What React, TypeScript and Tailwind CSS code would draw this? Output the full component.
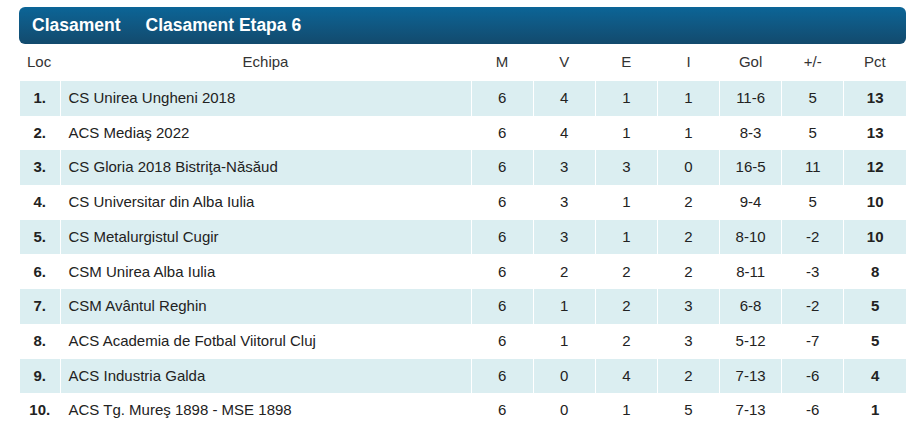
const rows: [number, string, number, number, number, number, string, number, number][] = [
  [1, "CS Unirea Ungheni 2018", 6, 4, 1, 1, "11-6", 5, 13],
  [2, "ACS Mediaş 2022", 6, 4, 1, 1, "8-3", 5, 13],
  [3, "CS Gloria 2018 Bistriţa-Năsăud", 6, 3, 3, 0, "16-5", 11, 12],
  [4, "CS Universitar din Alba Iulia", 6, 3, 1, 2, "9-4", 5, 10],
  [5, "CS Metalurgistul Cugir", 6, 3, 1, 2, "8-10", -2, 10],
  [6, "CSM Unirea Alba Iulia", 6, 2, 2, 2, "8-11", -3, 8],
  [7, "CSM Avântul Reghin", 6, 1, 2, 3, "6-8", -2, 5],
  [8, "ACS Academia de Fotbal Viitorul Cluj", 6, 1, 2, 3, "5-12", -7, 5],
  [9, "ACS Industria Galda", 6, 0, 4, 2, "7-13", -6, 4],
  [10, "ACS Tg. Mureş 1898 - MSE 1898", 6, 0, 1, 5, "7-13", -6, 1],
];

const stats = ["M", "V", "E", "I", "Gol", "+/-", "Pct"];

export default function App() {
  return (
    <div className="min-h-screen bg-white pl-[19px] pr-[8px] pt-[7px] font-['Liberation_Sans',Arial,sans-serif] text-[15px] text-[#222]">
      <div className="flex h-[37px] items-center gap-[25px] rounded-[6px] bg-gradient-to-b from-[#0b6597] to-[#124a6d] pl-[13px] text-[17.5px] font-bold text-white">
        <span>Clasament</span>
        <span>Clasament Etapa 6</span>
      </div>
      <table className="ml-px w-[886px] table-fixed border-collapse">
        <colgroup>
          <col className="w-[40px]" />
          <col className="w-[411px]" />
          {stats.map((s) => (
            <col key={s} className="w-[62.14px]" />
          ))}
        </colgroup>
        <thead>
          <tr className="h-[37px] text-[#333]">
            <th className="pl-[7px] text-left font-normal">Loc</th>
            <th className="text-center font-normal">Echipa</th>
            {stats.map((s) => (
              <th key={s} className="text-center font-normal">
                {s}
              </th>
            ))}
          </tr>
        </thead>
        <tbody>
          {rows.map((r, i) => (
            <tr key={r[0]} className={`h-[34.7px] ${i % 2 === 0 ? "bg-[#dbeef1]" : "bg-white"}`}>
              <td className="border-r border-white text-center font-bold">{r[0]}.</td>
              <td className="border-r border-white pl-[8px]">{r[1]}</td>
              <td className="border-r border-white text-center">{r[2]}</td>
              <td className="border-r border-white text-center">{r[3]}</td>
              <td className="border-r border-white text-center">{r[4]}</td>
              <td className="border-r border-white text-center">{r[5]}</td>
              <td className="border-r border-white text-center">{r[6]}</td>
              <td className="border-r border-white text-center">{r[7]}</td>
              <td className="text-center font-bold">{r[8]}</td>
            </tr>
          ))}
        </tbody>
      </table>
    </div>
  );
}
